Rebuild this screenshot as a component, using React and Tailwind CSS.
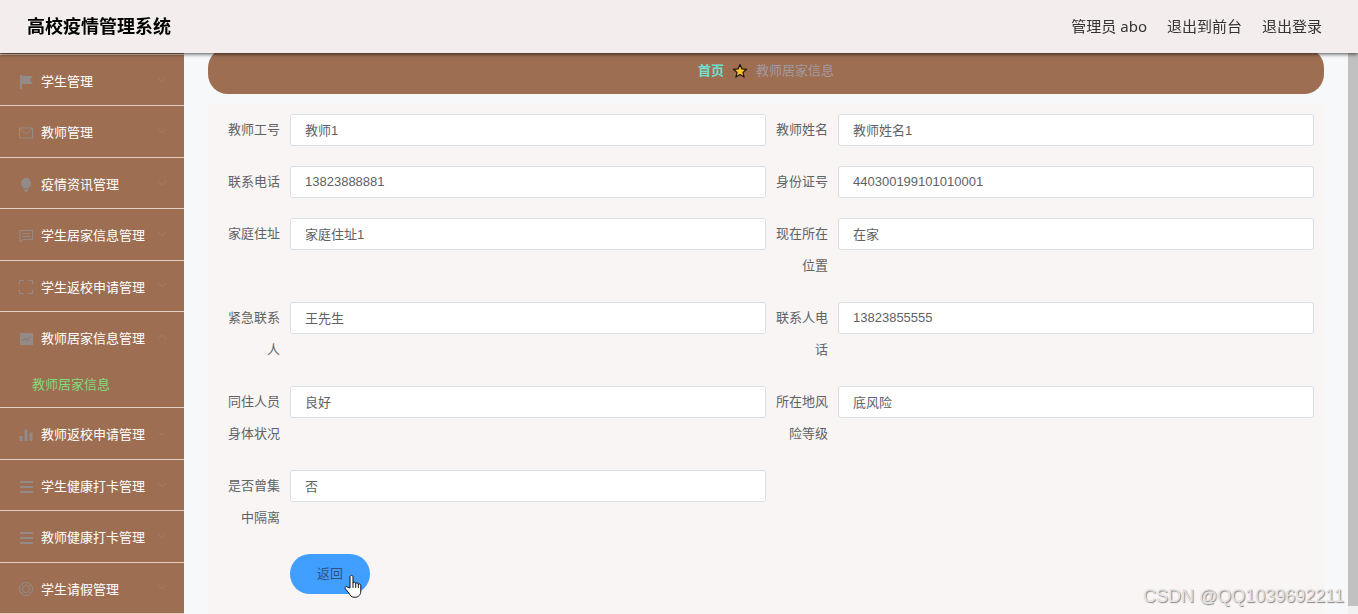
import { useState } from "react";

const menuItems = [
  { title: "学生管理", icon: "flag" },
  { title: "教师管理", icon: "message" },
  { title: "疫情资讯管理", icon: "bulb" },
  { title: "学生居家信息管理", icon: "chat" },
  { title: "学生返校申请管理", icon: "screen" },
  { title: "教师居家信息管理", icon: "trend", children: ["教师居家信息"] },
  { title: "教师返校申请管理", icon: "bars" },
  { title: "学生健康打卡管理", icon: "list" },
  { title: "教师健康打卡管理", icon: "list" },
  { title: "学生请假管理", icon: "help" },
];

const fields = [
  { id: "gonghao", label: "教师工号", value: "教师1" },
  { id: "xingming", label: "教师姓名", value: "教师姓名1" },
  { id: "dianhua", label: "联系电话", value: "13823888881" },
  { id: "shenfenzheng", label: "身份证号", value: "440300199101010001" },
  { id: "zhuzhi", label: "家庭住址", value: "家庭住址1" },
  { id: "weizhi", label: "现在所在位置", value: "在家" },
  { id: "lianxiren", label: "紧急联系人", value: "王先生" },
  { id: "lianxirendianhua", label: "联系人电话", value: "13823855555" },
  { id: "zhuangkuang", label: "同住人员身体状况", value: "良好" },
  { id: "dengji", label: "所在地风险等级", value: "底风险" },
  { id: "geli", label: "是否曾集中隔离", value: "否" },
];

const iconShapes = {
  flag: <path fill="currentColor" stroke="none" d="M2 1h2v14H2zM4 2h11l-3 4 3 4H4z" />,
  message: <path d="M1.500 3h13v10h-13zM2 4l6 5 6-5" />,
  bulb: (
    <path
      fill="currentColor"
      stroke="none"
      d="M8 1a5 5 0 0 0-5 5c0 2.500 1.500 3.500 2.500 5.500h5C11.500 9.500 13 8.500 13 6a5 5 0 0 0-5-5zM6 12.500h4V14H9v1H7v-1H6z"
    />
  ),
  chat: <path d="M2 2.500h12.500v9H5L2 14zM4.500 5.500H12M4.500 8.500H12" />,
  screen: (
    <path d="M1.500 5.500v-4h4M10.500 1.500h4v4M14.500 10.500v4h-4M5.500 14.500h-4v-4" />
  ),
  trend: (
    <>
      <path fill="currentColor" stroke="none" d="M2 2h13v12H2z" />
      <path className="stroke-[#9d6e52]" d="M4.500 9.500l2.500-2 2.500 1.500L13 6" />
    </>
  ),
  bars: (
    <path fill="currentColor" stroke="none" d="M1.500 9h3v5h-3zM6.500 2.500h3V14h-3zM11.500 5.500h3V14h-3z" />
  ),
  list: <path strokeWidth="2" d="M2 3h13M2 8h13M2 13h13" />,
  help: (
    <>
      <circle cx="8" cy="8" r="6.500" />
      <circle cx="8" cy="8" r="3.500" />
      <path d="M3.500 3.500l2 2M12.500 3.500l-2 2M3.500 12.500l2-2M12.500 12.500l-2-2" />
    </>
  ),
};

function MenuIcon({ name }) {
  return (
    <svg
      viewBox="0 0 16 16"
      fill="none"
      stroke="currentColor"
      strokeWidth="1"
      className="h-4 w-4 shrink-0 text-[#909399] opacity-80"
      aria-hidden="true"
    >
      {iconShapes[name]}
    </svg>
  );
}

function Chevron({ up }) {
  return (
    <svg
      viewBox="0 0 12 12"
      fill="none"
      stroke="currentColor"
      className={`mr-4 mb-1 ml-auto h-3 w-3 text-[#a67a62] ${up ? "rotate-180" : ""}`}
      aria-hidden="true"
    >
      <path d="M2 4l4 4 4-4" />
    </svg>
  );
}

function Header() {
  return (
    <header className="fixed inset-x-0 top-0 z-10 flex h-[53px] items-center justify-between bg-[#f3eeed] pr-9 pl-[27px] shadow-[0_1px_4px_rgba(0,0,0,0.7)]">
      <h1 className="text-lg font-bold text-black">高校疫情管理系统</h1>
      <div className="flex items-center gap-5 font-['Noto_Sans','Noto_Sans_CJK_SC',sans-serif] text-[15px] text-[#333]">
        <span>管理员 abo</span>
        <a href="#front">退出到前台</a>
        <a href="#logout">退出登录</a>
      </div>
    </header>
  );
}

function Sidebar() {
  const [opened, setOpened] = useState("教师居家信息管理");

  return (
    <nav className="w-[184px] shrink-0 bg-[#9d6e52] pt-[54px]">
      <ul className="flex min-h-full flex-col border-t border-[#e3cfc6]">
        {menuItems.map((item) => {
          const open = opened === item.title;

          return (
            <li
              key={item.title}
              className="flex grow flex-col border-b border-[#e3cfc6]"
            >
              <button
                type="button"
                aria-expanded={open}
                onClick={() => setOpened(open ? "" : item.title)}
                className="flex min-h-[50px] w-full grow cursor-pointer items-center gap-[7px] pt-[3px] pl-[18px] text-[13px] whitespace-nowrap text-white"
              >
                <MenuIcon name={item.icon} />
                {item.title}
                <Chevron up={open} />
              </button>
              {open &&
                item.children?.map((child) => (
                  <a
                    key={child}
                    href="#teacher-home"
                    className="block pl-8 text-[13px] leading-[45px] text-[#7fdc7a]"
                  >
                    {child}
                  </a>
                ))}
            </li>
          );
        })}
      </ul>
    </nav>
  );
}

function Breadcrumb() {
  return (
    <nav className="flex h-[46px] items-center justify-center gap-2 rounded-[20px] bg-[#9d6e52] text-[13px]">
      <a href="#home" className="font-bold text-[#6fe0d0]">
        首页
      </a>
      <svg viewBox="0 0 16 16" className="h-4 w-4" aria-hidden="true">
        <path
          d="M8 1.500l1.900 4.400 4.700.4-3.600 3.100 1.100 4.700L8 11.600l-4.100 2.500L5 9.400 1.400 6.300l4.700-.4z"
          fill="#fdbf2d"
          stroke="#1d1409"
          strokeWidth="1.200"
          strokeLinejoin="round"
        />
      </svg>
      <span className="text-[#a39a9f]">教师居家信息</span>
    </nav>
  );
}

function Field({ field }) {
  return (
    <div className="flex items-start">
      <label
        htmlFor={field.id}
        className="w-[72px] shrink-0 pr-[10px] text-right leading-8 text-[#606266]"
      >
        {field.label}
      </label>
      <input
        id={field.id}
        type="text"
        readOnly
        defaultValue={field.value}
        className="h-8 min-w-0 flex-1 rounded-[3px] border border-[#dcdfe6] bg-white px-[14px] pb-[2px] text-[#606266] outline-none"
      />
    </div>
  );
}

function HandCursor() {
  return (
    <svg
      viewBox="0 0 18 24"
      className="pointer-events-none absolute top-5 left-[54px] h-6 w-[18px]"
      aria-hidden="true"
    >
      <path
        d="M6 14V3c0-2.200 3-2.200 3 0v6c.4-1.200 2.700-1 2.700.6.500-1.100 2.600-.8 2.600.8.600-.9 2.500-.5 2.500 1.200V17c0 3.500-2 6.300-6 6.300-3.400 0-4.600-1.600-6-4.300L1.200 14.600c-.7-1.700 1.300-2.600 2.500-1.400z"
        fill="#fff"
        stroke="#111"
        strokeLinejoin="round"
      />
      <path d="M9 9v4.500M11.700 9.800v3.700M14.300 10.500v3" stroke="#111" strokeLinecap="round" />
    </svg>
  );
}

function DetailForm() {
  return (
    <form
      className="mt-[10px] grow bg-[#f8f5f4] p-[10px] text-[13px]"
      onSubmit={(e) => e.preventDefault()}
    >
      <div className="grid grid-cols-2 gap-y-5">
        {fields.map((field) => (
          <Field key={field.id} field={field} />
        ))}
      </div>
      <div className="mt-5 pl-[72px]">
        <button
          type="submit"
          className="relative h-10 w-20 cursor-pointer rounded-[20px] bg-[#409eff] text-[#34537a]"
        >
          返回
          <HandCursor />
        </button>
      </div>
    </form>
  );
}

export default function App() {
  return (
    <div className="flex h-screen overflow-hidden bg-[#f6f8fa] font-['Liberation_Sans','Noto_Sans_CJK_SC',sans-serif]">
      <Header />
      <Sidebar />
      <main className="flex min-w-0 flex-1 flex-col px-6 pt-12">
        <Breadcrumb />
        <DetailForm />
      </main>
      <div className="w-[10px] shrink-0 bg-[#f1f1f1] pb-2">
        <div className="h-full bg-[#c1c1c1]" />
      </div>
      <p className="pointer-events-none absolute right-[14px] bottom-1 font-['Liberation_Sans',sans-serif] text-lg leading-7 text-[#e4e2e2] [text-shadow:1px_1px_1px_#888]">
        CSDN @QQ1039692211
      </p>
    </div>
  );
}
